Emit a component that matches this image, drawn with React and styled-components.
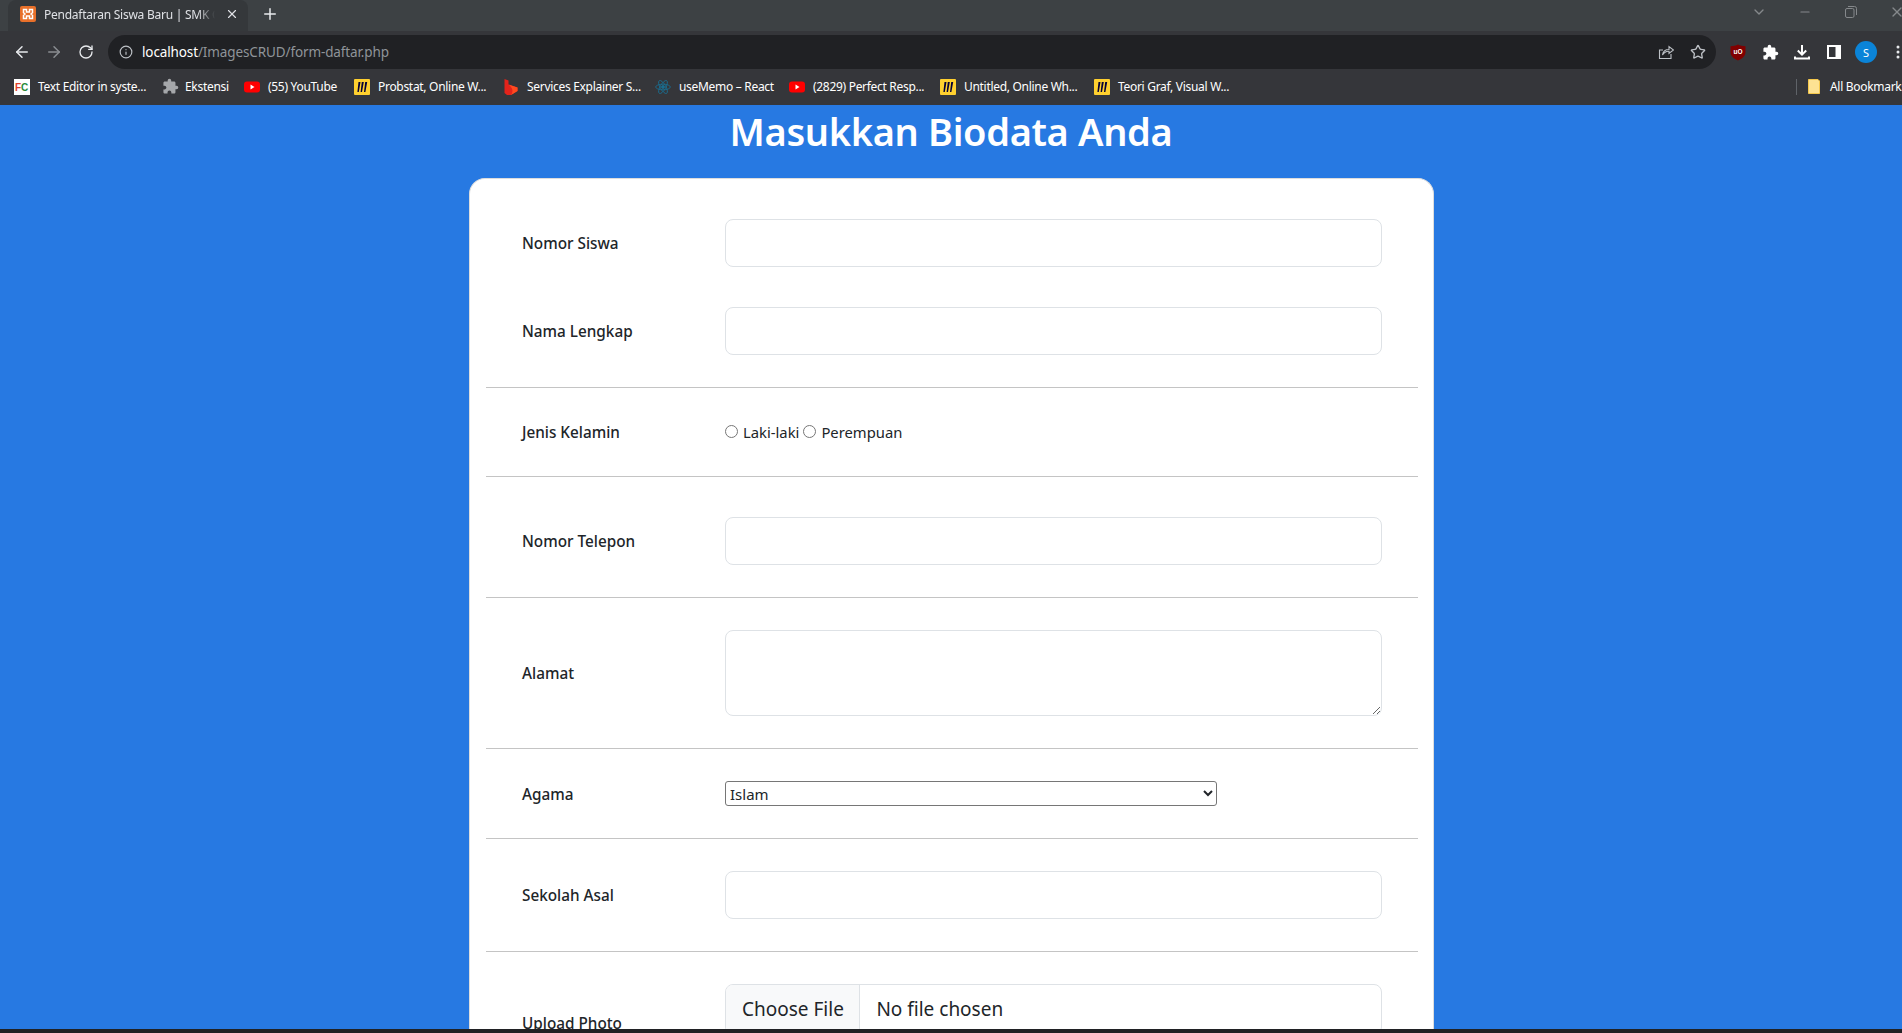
import React from "react";
import styled, { createGlobalStyle } from "styled-components";
import { ArrowLeft, ArrowRight, RotateCw, Info, Star, X, Plus, Minus, ChevronDown } from "lucide-react";
import { MdExtension } from "react-icons/md";

const Global = createGlobalStyle`
  html, body { margin: 0; padding: 0; height: 100%; overflow: hidden; }
  body { font-family: "Noto Sans", "Open Sans", Arial, sans-serif; }
  * { box-sizing: border-box; }
`;

const Shell = styled.div`
  display: flex;
  flex-direction: column;
  height: 100vh;
  overflow: hidden;
  background: #2779e2;
`;

const TabStrip = styled.div`
  display: flex;
  align-items: stretch;
  height: 31px;
  flex: none;
  padding-left: 8px;
  background: #3d4144;
  color: #fff;
`;

const Tab = styled.div`
  display: flex;
  align-items: center;
  width: 240px;
  height: 31px;
  padding: 0 9px 3px 12px;
  border-radius: 8px 8px 0 0;
  background: #35383b;
  font-size: 12px;
`;

const TabTitle = styled.span`
  flex: 1;
  margin: 0 10px 0 8px;
  overflow: hidden;
  white-space: nowrap;
  color: #dfe1e5;
  letter-spacing: -0.25px;
  -webkit-mask-image: linear-gradient(to right, #000 90%, transparent 100%);
  mask-image: linear-gradient(to right, #000 90%, transparent 100%);
`;

const NewTab = styled.div`
  display: flex;
  align-items: center;
  justify-content: center;
  width: 28px;
  margin-left: 8px;
  padding-bottom: 3px;
  color: #e8eaed;
`;

const WindowControls = styled.div`
  display: flex;
  margin-left: auto;
  margin-right: -18px;
  flex: none;
`;

const WindowButton = styled.div`
  display: flex;
  align-items: center;
  justify-content: center;
  width: 46px;
  height: 23px;
  color: #85888b;
`;

const Toolbar = styled.div`
  display: flex;
  align-items: center;
  flex: none;
  height: 38px;
  padding: 4px 0 0 6px;
  background: #35363a;
`;

const ToolButton = styled.div`
  display: flex;
  align-items: center;
  justify-content: center;
  flex: none;
  width: 32px;
  height: 32px;
  color: ${(p) => p.$color || "#e8eaed"};
`;

const Omnibox = styled.div`
  display: flex;
  align-items: center;
  flex: 1;
  height: 34px;
  margin: 0 6px;
  padding: 0 2px 0 11px;
  border-radius: 17px;
  background: #202124;
  font-size: 13.5px;
`;

const Url = styled.span`
  flex: 1;
  margin-left: 9px;
  color: #8f9499;
  white-space: nowrap;
  letter-spacing: -0.12px;
`;

const Host = styled.span`
  color: #fff;
`;

const Actions = styled.div`
  display: flex;
  flex: none;
  width: 192px;
  margin-right: -12px;
`;

const Avatar = styled.div`
  display: flex;
  align-items: center;
  justify-content: center;
  width: 22px;
  height: 22px;
  border-radius: 50%;
  background: #0b84d8;
  color: #fff;
  font-size: 11px;
`;

const BookmarkBar = styled.div`
  display: flex;
  align-items: center;
  flex: none;
  height: 36px;
  padding: 0 0 1px 14px;
  background: #35363a;
  overflow: hidden;
`;

const Bookmark = styled.div`
  display: flex;
  align-items: center;
  flex: none;
  width: ${(p) => p.$width}px;
  color: #fff;
  font-size: 12px;
  white-space: nowrap;
  letter-spacing: -0.3px;

  svg {
    flex: none;
  }
`;

const BookmarkLabel = styled.span`
  margin-left: ${(p) => p.$gap || 8}px;
`;

const BookmarkDivider = styled.div`
  flex: none;
  width: 1px;
  height: 16px;
  margin-left: auto;
  margin-right: 11px;
  background: #5f6368;
`;

const PageArea = styled.main`
  flex: 1;
  min-height: 0;
  overflow: hidden;
`;

const Heading = styled.h1`
  margin: 2px 0 23px;
  text-align: center;
  color: #fff;
  font-size: 38px;
  line-height: 48px;
  font-weight: 600;
  letter-spacing: -0.35px;
`;

const Card = styled.form`
  width: 965px;
  margin: 0 0 0 469px;
  padding: 0 15px 0 16px;
  border: 1px solid #ddd;
  border-bottom: none;
  border-radius: 16px;
  background: #fff;
`;

const Section = styled.section`
  display: flex;
  flex-direction: column;
  gap: 40px;
  padding: ${(p) => p.$top || 32}px 36px 32px;
  border-bottom: 1px solid #c4c4c4;
`;

const Row = styled.div`
  display: grid;
  grid-template-columns: 203px 657px;
  align-items: center;
  min-height: ${(p) => p.$minHeight || 0}px;
`;

const Label = styled.label`
  color: #212529;
  font-size: 15.3px;
  font-weight: 500;
  line-height: 24px;
`;

const TextInput = styled.input`
  display: block;
  width: 100%;
  height: 48px;
  padding: 8px 16px;
  border: 1px solid #dee2e6;
  border-radius: 8px;
  background: #fff;
  font: inherit;
  outline: none;
`;

const TextArea = styled.textarea`
  display: block;
  width: 100%;
  height: 86px;
  padding: 8px 16px;
  border: 1px solid #dee2e6;
  border-radius: 8px;
  background: #fff;
  font: inherit;
  outline: none;
`;

const RadioGroup = styled.div`
  display: flex;
  align-items: center;
  height: 24px;
  color: #212529;
  font-size: 14.8px;
`;

const RadioInput = styled.input`
  width: 13px;
  height: 13px;
  margin: 0 5px 1px 0;
`;

const RadioText = styled.span`
  margin-right: ${(p) => p.$gap || 0}px;
`;

const Select = styled.select`
  display: block;
  width: 492px;
  height: 25px;
  padding: 0;
  border: 1px solid #767676;
  border-radius: 3px;
  background: #fff;
  color: #212529;
  font-family: inherit;
  font-size: 15px;
`;

const FileField = styled.div`
  display: flex;
  align-items: center;
  align-self: start;
  width: 100%;
  height: 51px;
  padding-bottom: 2px;
  border: 1px solid #dee2e6;
  border-radius: 8px;
  background: #fff;
  color: #212529;
  font-size: 19px;
  overflow: hidden;
`;

const FileButton = styled.span`
  display: flex;
  align-items: center;
  align-self: stretch;
  margin-bottom: -2px;
  padding: 0 15.500px 2px 16px;
  border-right: 1px solid #dee2e6;
  background: #f8f9fa;
`;

const FileName = styled.span`
  margin-left: 16px;
`;

const BottomEdge = styled.div`
  flex: none;
  height: 4px;
  background: #202124;
`;

const XamppIcon = () => (
  <svg width="16" height="16" viewBox="0 0 16 16">
    <rect width="16" height="16" rx="2" fill="#e8702a" />
    <path d="M3.500 3.500h3v2.500h3V3.500h3v3.200L11 8l1.500 1.300v3.200h-3V10h-3v2.500h-3V9.300L5 8 3.500 6.700z" fill="none" stroke="#fff" strokeWidth="1.500" />
  </svg>
);

const FcIcon = () => (
  <svg width="16" height="16" viewBox="0 0 16 16">
    <rect width="16" height="16" fill="#fff" />
    <text x="1" y="12" fontSize="10" fontWeight="700" fontFamily="Liberation Sans, sans-serif" fill="#e0402a">F</text>
    <text x="7" y="12" fontSize="10" fontWeight="700" fontFamily="Liberation Sans, sans-serif" fill="#2a8a3a">C</text>
  </svg>
);

const YouTubeIcon = () => (
  <svg width="16" height="16" viewBox="0 0 16 16">
    <rect y="2.500" width="16" height="11" rx="3" fill="#f00" />
    <path d="M6.500 5.600v4.800L10.500 8z" fill="#fff" />
  </svg>
);

const MiroIcon = () => (
  <svg width="16" height="16" viewBox="0 0 16 16">
    <rect width="16" height="16" rx="1" fill="#ffd02f" />
    <path d="M4.500 3h2L4.800 13H3.400zM7.800 3h2L8 13H6.600zM11.200 3h2l-1.800 10H10z" fill="#050038" />
  </svg>
);

const BrandIcon = () => (
  <svg width="14" height="16" viewBox="0 0 14 16">
    <path d="M0.500 0L4.500 1.500V5.500L13.500 8.500V12L7 16H3L0.500 14z" fill="#e3231b" />
    <path d="M4.500 5.500L13.500 8.500V12L7 16C9.500 13 9 9 4.500 5.500z" fill="#ff4a1f" />
  </svg>
);

const ReactIcon = () => (
  <svg width="16" height="16" viewBox="-12 -12 24 24" fill="none" stroke="#1a6d8f" strokeWidth="1.300">
    <circle r="2.200" fill="#1a6d8f" />
    <ellipse rx="11" ry="4.200" />
    <ellipse rx="11" ry="4.200" transform="rotate(60)" />
    <ellipse rx="11" ry="4.200" transform="rotate(120)" />
  </svg>
);

const FolderIcon = () => (
  <svg width="12" height="15" viewBox="0 0 12 15">
    <path d="M0.500 0.500h9.500l1.500 1.500v12.500h-11z" fill="#fde293" stroke="#f5c84c" />
  </svg>
);

const RestoreIcon = () => (
  <svg width="12" height="12" viewBox="0 0 12 12" fill="none" stroke="currentColor">
    <rect x="0.500" y="2.500" width="8.500" height="9" rx="1.500" />
    <path d="M3 0.500h6.500a2 2 0 0 1 2 2V9" />
  </svg>
);

const ShareIcon = () => (
  <svg width="16" height="16" viewBox="0 0 16 16" fill="none" stroke="#bdc1c6" strokeWidth="1.100">
    <path d="M13 10v4.500H1.500V6H5" />
    <path d="M4.500 11c.5-3.500 3-5.500 6.500-5.500V2.500L15.500 6 11 9.500V7.200C8.500 7 6 8.500 4.500 11z" />
  </svg>
);

const UblockIcon = () => (
  <svg width="16" height="17" viewBox="0 0 16 17">
    <path d="M8 0.500c2 1.200 4.500 1.700 7.500 1.700v6c0 3.800-3.500 6.500-7.500 8.300C4 14.700 0.500 12 0.500 8.200v-6C3.500 2.200 6 1.700 8 0.500z" fill="#800000" />
    <text x="8" y="9.500" textAnchor="middle" fontSize="6.500" fontWeight="700" fontFamily="Liberation Sans, sans-serif" fill="#fff">uO</text>
  </svg>
);

const DownloadIcon = () => (
  <svg width="16" height="16" viewBox="0 0 16 16" fill="none" stroke="#fff" strokeWidth="2">
    <path d="M8 1v9M3.800 6.500 8 10.700l4.200-4.200" />
    <path d="M1 12.500v2h14v-2" />
  </svg>
);

const SidebarIcon = () => (
  <svg width="14" height="14" viewBox="0 0 14 14">
    <rect width="14" height="14" fill="#fff" />
    <rect x="2" y="2" width="6.500" height="10" fill="#35363a" />
  </svg>
);

const DotsIcon = () => (
  <svg width="4" height="14" viewBox="0 0 4 14" fill="#e8eaed">
    <circle cx="2" cy="2" r="1.500" />
    <circle cx="2" cy="7" r="1.500" />
    <circle cx="2" cy="12" r="1.500" />
  </svg>
);

const bookmarks = [
  { width: 148, icon: <FcIcon />, label: "Text Editor in syste..." },
  { width: 82, icon: <MdExtension size={17} color="#a5a7aa" />, label: "Ekstensi", gap: 6 },
  { width: 110, icon: <YouTubeIcon />, label: "(55) YouTube" },
  { width: 150, icon: <MiroIcon />, label: "Probstat, Online W..." },
  { width: 151, icon: <BrandIcon />, label: "Services Explainer S...", gap: 9 },
  { width: 134, icon: <ReactIcon />, label: "useMemo – React" },
  { width: 151, icon: <YouTubeIcon />, label: "(2829) Perfect Resp..." },
  { width: 154, icon: <MiroIcon />, label: "Untitled, Online Wh..." },
  { width: 140, icon: <MiroIcon />, label: "Teori Graf, Visual W..." },
];

export default function App() {
  return (
    <Shell>
      <Global />
      <TabStrip>
        <Tab>
          <XamppIcon />
          <TabTitle>Pendaftaran Siswa Baru | SMK Cendekia</TabTitle>
          <X size={14} color="#dfe1e5" />
        </Tab>
        <NewTab><Plus size={18} /></NewTab>
        <WindowControls>
          <WindowButton><ChevronDown size={16} /></WindowButton>
          <WindowButton><Minus size={14} /></WindowButton>
          <WindowButton><RestoreIcon /></WindowButton>
          <WindowButton><X size={16} /></WindowButton>
        </WindowControls>
      </TabStrip>
      <Toolbar>
        <ToolButton><ArrowLeft size={18} /></ToolButton>
        <ToolButton $color="#8a8d91"><ArrowRight size={18} /></ToolButton>
        <ToolButton><RotateCw size={16} /></ToolButton>
        <Omnibox>
          <Info size={14} color="#bdc1c6" />
          <Url><Host>localhost</Host>/ImagesCRUD/form-daftar.php</Url>
          <ToolButton><ShareIcon /></ToolButton>
          <ToolButton $color="#bdc1c6"><Star size={16} /></ToolButton>
        </Omnibox>
        <Actions>
          <ToolButton><UblockIcon /></ToolButton>
          <ToolButton><MdExtension size={17} color="#fff" /></ToolButton>
          <ToolButton><DownloadIcon /></ToolButton>
          <ToolButton><SidebarIcon /></ToolButton>
          <ToolButton><Avatar>S</Avatar></ToolButton>
          <ToolButton><DotsIcon /></ToolButton>
        </Actions>
      </Toolbar>
      <BookmarkBar>
        {bookmarks.map((b) => (
          <Bookmark key={b.label} $width={b.width}>
            {b.icon}
            <BookmarkLabel $gap={b.gap}>{b.label}</BookmarkLabel>
          </Bookmark>
        ))}
        <BookmarkDivider />
        <Bookmark $width={94}>
          <FolderIcon />
          <BookmarkLabel $gap={10}>All Bookmarks</BookmarkLabel>
        </Bookmark>
      </BookmarkBar>
      <PageArea>
        <Heading>Masukkan Biodata Anda</Heading>
        <Card>
          <Section $top={40}>
            <Row>
              <Label>Nomor Siswa</Label>
              <TextInput type="text" />
            </Row>
            <Row>
              <Label>Nama Lengkap</Label>
              <TextInput type="text" />
            </Row>
          </Section>
          <Section>
            <Row>
              <Label>Jenis Kelamin</Label>
              <RadioGroup>
                <RadioInput type="radio" name="jk" />
                <RadioText $gap={4}>Laki-laki</RadioText>
                <RadioInput type="radio" name="jk" />
                <RadioText>Perempuan</RadioText>
              </RadioGroup>
            </Row>
          </Section>
          <Section $top={40}>
            <Row>
              <Label>Nomor Telepon</Label>
              <TextInput type="text" />
            </Row>
          </Section>
          <Section>
            <Row>
              <Label>Alamat</Label>
              <TextArea />
            </Row>
          </Section>
          <Section>
            <Row>
              <Label>Agama</Label>
              <Select defaultValue="Islam">
                <option>Islam</option>
                <option>Kristen</option>
                <option>Katolik</option>
                <option>Hindu</option>
                <option>Buddha</option>
              </Select>
            </Row>
          </Section>
          <Section>
            <Row>
              <Label>Sekolah Asal</Label>
              <TextInput type="text" />
            </Row>
          </Section>
          <Section>
            <Row $minHeight={78}>
              <Label>Upload Photo</Label>
              <FileField>
                <FileButton>Choose File</FileButton>
                <FileName>No file chosen</FileName>
              </FileField>
            </Row>
          </Section>
        </Card>
      </PageArea>
      <BottomEdge />
    </Shell>
  );
}
